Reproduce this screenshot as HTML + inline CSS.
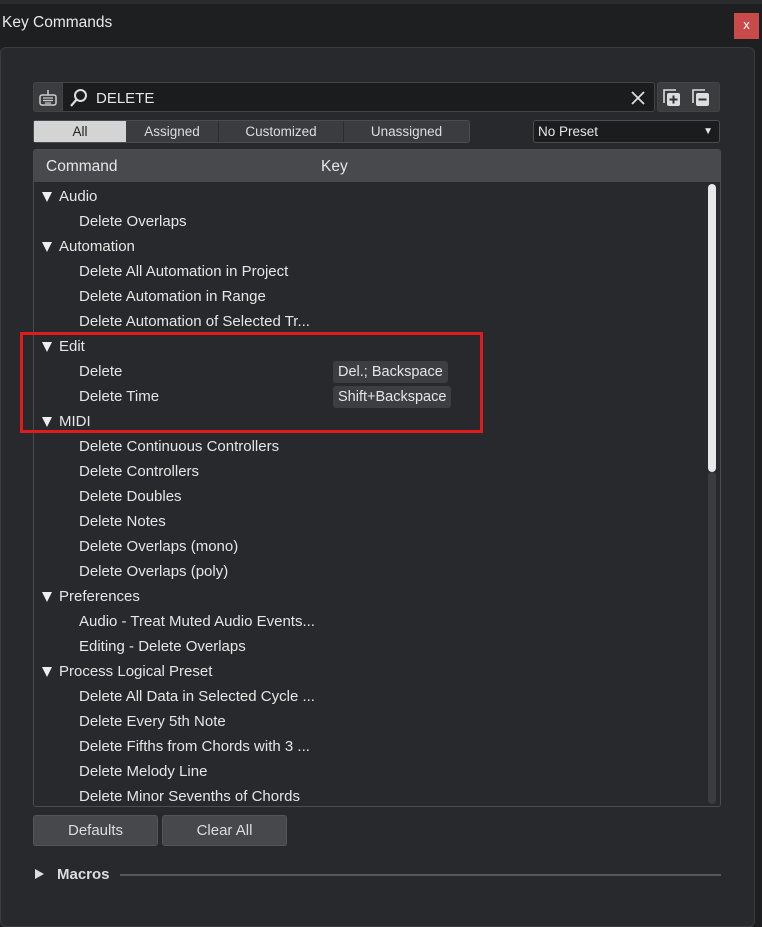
<!DOCTYPE html>
<html><head><style>
*{margin:0;padding:0;box-sizing:border-box}
body{width:762px;height:923px;background:#1e1f20;font-family:"Liberation Sans",sans-serif;color:#e6e6e6;position:relative;overflow:hidden;font-size:15px}
.a{position:absolute}
.row{position:absolute;left:0;height:25px;line-height:25px;white-space:nowrap}
.g{left:8px}
.g:before{content:"";display:inline-block;width:0;height:0;border-left:5.5px solid transparent;border-right:5.5px solid transparent;border-top:10px solid #eee;margin-right:7px;vertical-align:-1px}
.c{left:45px}
.chip{position:absolute;left:299px;top:2px;height:22px;line-height:22px;padding:0 5px;background:#3c3e41;border-radius:3px;font-size:14.5px}
</style></head><body>
<div class="a" style="left:0;top:0;width:762px;height:4px;background:#2a2b2d"></div>
<div class="a" style="left:2px;top:14px;font-size:15.5px;color:#e8e8e8">Key Commands</div>
<div class="a" style="left:734px;top:13px;width:25px;height:26px;background:#c94a4a;color:#fff;font-size:13px;text-align:center;line-height:24px">x</div>
<div class="a" style="left:0;top:47px;width:755px;height:880px;background:#27292c;border:1px solid #3a3c3f;border-radius:6px"></div>
<div class="a" style="left:33px;top:82px;width:622px;height:30px;background:#1b1c1d;border:1px solid #444;border-radius:3px"></div>
<div class="a" style="left:33px;top:82px;width:30px;height:30px;background:#3a3c3f;border:1px solid #444;border-radius:3px 0 0 3px"></div>
<svg class="a" style="left:37px;top:87px" width="22" height="22" viewBox="0 0 22 22"><path d="M11 3 V8" stroke="#ccc" stroke-width="1.5"/><rect x="3" y="8" width="16" height="10" rx="2" fill="none" stroke="#ccc" stroke-width="1.5"/><path d="M6 11h10M6 13.5h10M8 16h6" stroke="#ccc" stroke-width="1.2"/></svg>
<svg class="a" style="left:69px;top:88px" width="20" height="20" viewBox="0 0 20 20"><circle cx="11.5" cy="7.5" r="5.5" fill="none" stroke="#ddd" stroke-width="2"/><path d="M8 11 L2 18" stroke="#ddd" stroke-width="2.2"/></svg>
<div class="a" style="left:96px;top:90px;font-size:15px">DELETE</div>
<svg class="a" style="left:630px;top:90px" width="16" height="16" viewBox="0 0 16 16"><path d="M2 2L14 14M14 2L2 14" stroke="#ddd" stroke-width="1.8"/></svg>
<div class="a" style="left:657px;top:82px;width:63px;height:30px;background:#3a3c3f;border:1px solid #444;border-radius:3px"></div>
<svg class="a" style="left:661px;top:86px" width="56" height="22" viewBox="0 0 56 22"><path d="M3 17V4h12" fill="none" stroke="#ddd" stroke-width="1.6"/><rect x="6" y="7" width="13" height="13" rx="2" fill="#ddd"/><path d="M12.5 9.5v8M8.5 13.5h8" stroke="#333" stroke-width="2"/><path d="M32 17V4h12" fill="none" stroke="#ddd" stroke-width="1.6"/><rect x="35" y="7" width="13" height="13" rx="2" fill="#ddd"/><path d="M37.5 13.5h8" stroke="#333" stroke-width="2"/></svg>
<div class="a" style="left:33px;top:120px;width:437px;height:23px;background:#3a3c3f;border:1px solid #4a4c4f;border-radius:3px;font-size:13.5px;color:#ddd">
<div class="a" style="left:0;top:0;width:92px;height:21px;background:#d4d4d4;color:#222;text-align:center;line-height:21px">All</div>
<div class="a" style="left:92px;top:0;width:93px;height:21px;text-align:center;line-height:21px;border-right:1px solid #2a2c2e">Assigned</div>
<div class="a" style="left:185px;top:0;width:125px;height:21px;text-align:center;line-height:21px;border-right:1px solid #2a2c2e">Customized</div>
<div class="a" style="left:310px;top:0;width:125px;height:21px;text-align:center;line-height:21px">Unassigned</div>
</div>
<div class="a" style="left:533px;top:120px;width:187px;height:23px;background:#1b1c1d;border:1px solid #4a4c4f;border-radius:3px;font-size:13.5px;line-height:21px;padding-left:4px">No Preset<span style="position:absolute;right:6px;font-size:10px">▼</span></div>
<div class="a" style="left:33px;top:149px;width:688px;height:658px;border:1px solid #4a4c4f;border-radius:3px;background:#27292c;overflow:hidden">
<div class="a" style="left:0;top:0;width:688px;height:32px;background:#47494c"></div>
<div class="a" style="left:12px;top:8px;font-size:15.5px">Command</div>
<div class="a" style="left:287px;top:8px;font-size:15.5px">Key</div>
<div class="a" style="left:674px;top:34px;width:8px;height:288px;background:#e8e8e8;border-radius:4px"></div>
<div class="a" style="left:674px;top:322px;width:8px;height:332px;background:#3a3c3f;border-radius:4px"></div>
<div class="a" style="left:0;top:34px;width:670px">
<div class="row g" style="top:0">Audio</div>
<div class="row c" style="top:25px">Delete Overlaps</div>
<div class="row g" style="top:50px">Automation</div>
<div class="row c" style="top:75px">Delete All Automation in Project</div>
<div class="row c" style="top:100px">Delete Automation in Range</div>
<div class="row c" style="top:125px">Delete Automation of Selected Tr...</div>
<div class="row g" style="top:150px">Edit</div>
<div class="row c" style="top:175px;width:600px">Delete<span class="chip" style="left:254px">Del.; Backspace</span></div>
<div class="row c" style="top:200px;width:600px">Delete Time<span class="chip" style="left:254px">Shift+Backspace</span></div>
<div class="row g" style="top:225px">MIDI</div>
<div class="row c" style="top:250px">Delete Continuous Controllers</div>
<div class="row c" style="top:275px">Delete Controllers</div>
<div class="row c" style="top:300px">Delete Doubles</div>
<div class="row c" style="top:325px">Delete Notes</div>
<div class="row c" style="top:350px">Delete Overlaps (mono)</div>
<div class="row c" style="top:375px">Delete Overlaps (poly)</div>
<div class="row g" style="top:400px">Preferences</div>
<div class="row c" style="top:425px">Audio - Treat Muted Audio Events...</div>
<div class="row c" style="top:450px">Editing - Delete Overlaps</div>
<div class="row g" style="top:475px">Process Logical Preset</div>
<div class="row c" style="top:500px">Delete All Data in Selected Cycle ...</div>
<div class="row c" style="top:525px">Delete Every 5th Note</div>
<div class="row c" style="top:550px">Delete Fifths from Chords with 3 ...</div>
<div class="row c" style="top:575px">Delete Melody Line</div>
<div class="row c" style="top:600px">Delete Minor Sevenths of Chords</div>
</div>
</div>
<div class="a" style="left:20px;top:332px;width:463px;height:101px;border:3px solid #e01b1b"></div>
<div class="a" style="left:33px;top:815px;width:125px;height:31px;background:#46484b;border:1px solid #555;border-radius:3px;text-align:center;line-height:29px;font-size:15px;color:#ddd">Defaults</div>
<div class="a" style="left:162px;top:815px;width:125px;height:31px;background:#46484b;border:1px solid #555;border-radius:3px;text-align:center;line-height:29px;font-size:15px;color:#ddd">Clear All</div>
<div class="a" style="left:35px;top:869px;width:0;height:0;border-top:5px solid transparent;border-bottom:5px solid transparent;border-left:9px solid #ddd"></div>
<div class="a" style="left:57px;top:866px;font-size:15px;font-weight:bold;color:#ddd">Macros</div>
<div class="a" style="left:120px;top:874px;width:601px;height:2px;background:#55575a"></div>
</body></html>
